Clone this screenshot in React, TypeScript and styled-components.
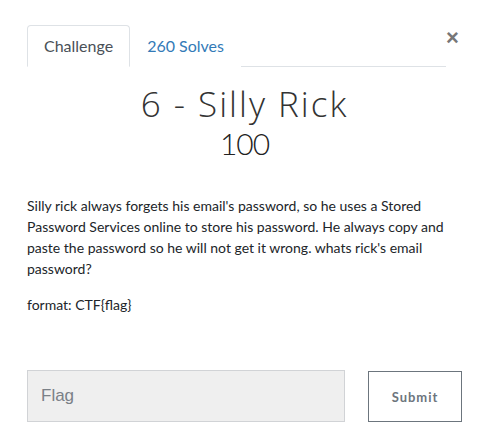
import { useState } from 'react';
import styled, { createGlobalStyle } from 'styled-components';

const GlobalStyle = createGlobalStyle`
    body {
        margin: 0;
        background: #fff;
        font-family: Lato, "Liberation Sans", sans-serif;
        color: #212529;
    }
`;

const Modal = styled.div`
    width: 481px;
    box-sizing: border-box;
    padding: 25px 19px 0 27px;
`;

const Header = styled.div`
    display: flex;
    align-items: flex-start;
`;

const Tabs = styled.ul`
    display: flex;
    flex: 1;
    margin: 0;
    padding: 0;
    list-style: none;
    border-bottom: 1px solid #dee2e6;
`;

const Tab = styled.li<{ $active?: boolean }>`
    margin-bottom: -1px;
    padding: 8px 16px;
    font-size: 16px;
    line-height: 24px;
    border: 1px solid ${p => (p.$active ? '#dee2e6' : 'transparent')};
    border-bottom-color: ${p => (p.$active ? '#fff' : 'transparent')};
    border-radius: 4px 4px 0 0;
    background: #fff;
    color: ${p => (p.$active ? '#495057' : '#337ab7')};
    cursor: pointer;
`;

const Close = styled.button`
    margin: 2px 4px 0 0;
    padding: 0;
    width: 12px;
    border: none;
    background: none;
    font-family: "Liberation Sans", sans-serif;
    font-size: 22px;
    font-weight: 700;
    line-height: 22px;
    color: #777;
    cursor: pointer;
    text-align: center;
    overflow: visible;
`;

const Title = styled.h2`
    margin: 16px 0 0;
    text-align: center;
    font-family: "Open Sans", sans-serif;
    font-weight: 300;
    font-size: 35px;
    line-height: 42px;
    letter-spacing: 2px;
    color: #333;
`;

const Points = styled.h3`
    margin: 0 0 34px;
    text-align: center;
    font-weight: 300;
    font-size: 30px;
    line-height: 36px;
    letter-spacing: -1px;
    color: #222;
`;

const Description = styled.div`
    width: 420px;
    font-size: 14px;
    line-height: 21px;
    color: #212529;

    p {
        margin: 0 0 15px;
    }
`;

const SubmitRow = styled.form`
    display: flex;
    align-items: flex-start;
    gap: 23px;
    margin-top: 55px;
`;

const FlagInput = styled.input`
    flex: none;
    width: 318px;
    height: 52px;
    box-sizing: border-box;
    padding: 0 13px;
    border: 1px solid #d1d3d6;
    background: #efefef;
    font-family: "Liberation Sans", sans-serif;
    font-size: 17px;
    color: #495057;

    &::placeholder {
        color: #7a8087;
    }

    &:focus {
        outline: none;
    }
`;

const SubmitButton = styled.button`
    flex: none;
    width: 94px;
    height: 51px;
    margin-top: 1px;
    box-sizing: border-box;
    border: 1px solid #6c757d;
    background: #fff;
    font-family: Lato, sans-serif;
    font-weight: 700;
    font-size: 13px;
    letter-spacing: 1px;
    color: #6c757d;
    cursor: pointer;
`;

const App = () => {
  const [tab, setTab] = useState('challenge');
  const [flag, setFlag] = useState('');

  return (
    <Modal>
      <GlobalStyle />
      <Header>
        <Tabs>
          <Tab $active={tab === 'challenge'} onClick={() => setTab('challenge')}>Challenge</Tab>
          <Tab $active={tab === 'solves'} onClick={() => setTab('solves')}>260 Solves</Tab>
        </Tabs>
        <Close aria-label="Close">×</Close>
      </Header>
      <Title>6 - Silly Rick</Title>
      <Points>100</Points>
      <Description>
        <p>
          Silly rick always forgets his email's password, so he uses a Stored Password Services
          online to store his password. He always copy and paste the password so he will not get it
          wrong. whats rick's email password?
        </p>
        <p>format: CTF{'{'}flag{'}'}</p>
      </Description>
      <SubmitRow onSubmit={e => e.preventDefault()}>
        <FlagInput
          type="text"
          placeholder="Flag"
          value={flag}
          onChange={e => setFlag(e.target.value)}
        />
        <SubmitButton type="submit">Submit</SubmitButton>
      </SubmitRow>
    </Modal>
  );
};

export default App;
